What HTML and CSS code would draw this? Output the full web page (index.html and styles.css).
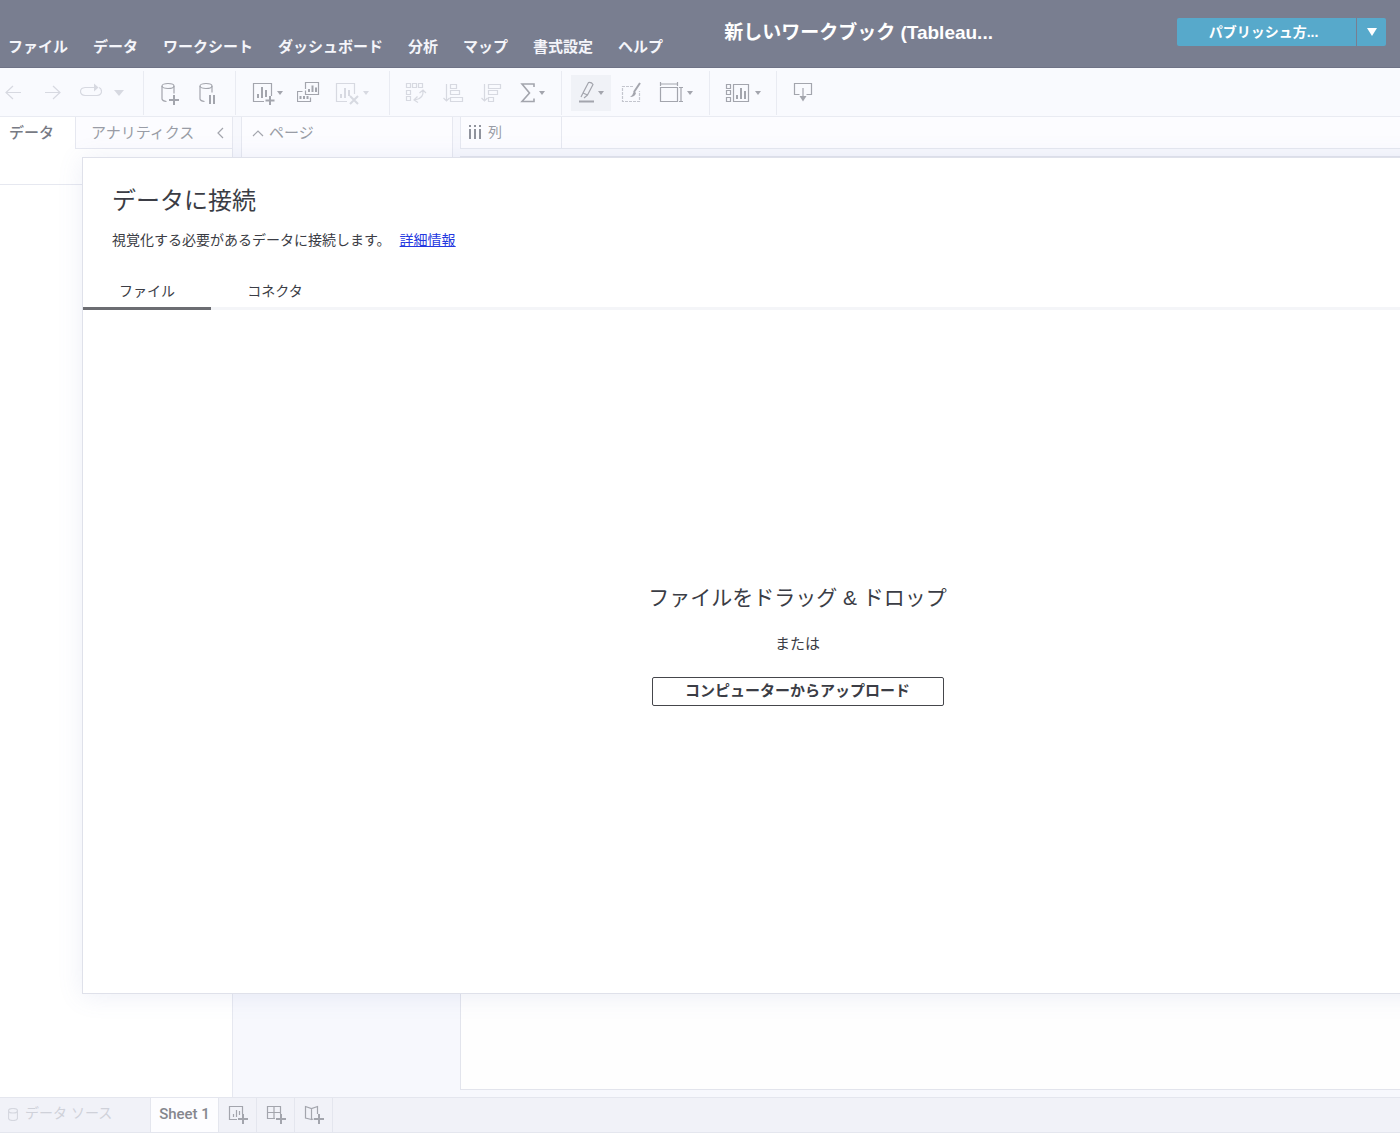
FILE: index.html
```html
<!DOCTYPE html>
<html lang="ja">
<head>
  <meta charset="UTF-8" />
  <meta name="viewport" content="width=device-width, initial-scale=1.0"/>
  <title>新しいワークブック</title>
  <link rel="stylesheet" href="styles.css">
</head>
<body>
  <header class="topbar">
    <nav class="menu">
      <a href="#">ファイル</a>
      <a href="#">データ</a>
      <a href="#">ワークシート</a>
      <a href="#">ダッシュボード</a>
      <a href="#">分析</a>
      <a href="#">マップ</a>
      <a href="#">書式設定</a>
      <a href="#">ヘルプ</a>
    </nav>
    <h1>新しいワークブック (Tableau...</h1>
    <div class="publish">
      <button class="publish-main">パブリッシュ方...</button>
      <button class="publish-more" aria-label="その他"><svg width="10" height="8" viewBox="0 0 10 8"><path d="M0 0h10L5 8z" fill="#fff"/></svg></button>
    </div>
  </header>

  <div class="toolbar">
    <div class="group history">
      <button class="tool off" aria-label="元に戻す"><svg width="22" height="24" viewBox="0 0 22 24"><path d="M19 11.500H4M11 5l-7 6.500 7 6.500"/></svg></button>
      <button class="tool off" aria-label="やり直し"><svg width="22" height="24" viewBox="0 0 22 24"><path d="M4 11.500h15M12 5l7 6.500-7 6.500"/></svg></button>
      <button class="tool off" aria-label="リプレイ">
        <svg width="22" height="24" viewBox="0 0 22 24"><path d="M15 6.500H5q-4.500.5-4.500 4t4.500 4h12q4.500-.5 4.500-4 0-3-2.500-4"/><path class="fill" d="M14 2.500l4.500 4-4.500 4z"/></svg>
        <svg width="10" height="6" viewBox="0 0 10 6"><path class="fill" d="M0 0h10L5 6z"/></svg>
      </button>
    </div>

    <div class="group">
      <button class="tool" aria-label="新しいデータソース"><svg width="24" height="24" viewBox="0 0 24 24"><ellipse cx="10" cy="5" rx="6" ry="2.500"/><path d="M4 5v13q.5 2 4.500 2.500M16 5v7.500"/><path class="bold" d="M16 14v10M11 19h10"/></svg></button>
      <button class="tool" aria-label="自動更新の一時停止"><svg width="24" height="24" viewBox="0 0 24 24"><ellipse cx="10" cy="5" rx="6" ry="2.500"/><path d="M4 5v13q.5 2 4.500 2.500M16 5v6.500"/><path class="bold" d="M14 14v9M18 14v9"/></svg></button>
    </div>

    <div class="group sheets">
      <button class="tool" aria-label="新しいワークシート">
        <svg width="24" height="24" viewBox="0 0 24 24"><path d="M13 20.500H2.500v-18h18V15"/><path class="bold" d="M7 13v4M11 6v11M15 9v7M19 15v9M14.500 19.500h9"/></svg>
        <svg width="6" height="4" viewBox="0 0 6 4"><path class="fill" d="M0 0h6L3 4z"/></svg>
      </button>
      <button class="tool" aria-label="複製"><svg width="24" height="24" viewBox="0 0 24 24"><path d="M8.500 8V1.500h13v12h-13v-4M5.500 10.500h-5v10h13v-4"/><path class="bold" d="M12 8v3M15.500 4.500V11M19 6.500V11M3.500 15v3M7 15v3M10.500 15v3"/></svg></button>
      <button class="tool clear off" aria-label="シートのクリア">
        <svg width="24" height="24" viewBox="0 0 24 24"><path d="M12 20.500H1.500v-18h18V13"/><path class="bold" d="M6 13v4M10 7v10M14 9v6M15 15l8 8M23 15l-8 8"/></svg>
        <svg width="6" height="4" viewBox="0 0 6 4"><path class="fill" d="M0 0h6L3 4z"/></svg>
      </button>
    </div>

    <div class="group">
      <button class="tool off" aria-label="行と列の交換"><svg width="24" height="24" viewBox="0 0 24 24"><path d="M2.500 2.500h4v4h-4zM8.500 2.500h4v4h-4zM14.500 2.500h4v4h-4zM2.500 9.500h4v4h-4zM2.500 15.500h4v4h-4zM19 9.500q1 8-8 9.500M15.500 12l3.500-3 3 3M13.500 15.500L10 19l4 2.500"/></svg></button>
      <button class="tool off" aria-label="昇順で並べ替え"><svg width="24" height="24" viewBox="0 0 24 24"><path d="M4.500 3v17M1.500 17l3 3 3-3M8.500 3.500h6v4h-6zM8.500 9.500h9v4h-9zM8.500 16.500h12v4h-12z"/></svg></button>
      <button class="tool off" aria-label="降順で並べ替え"><svg width="24" height="24" viewBox="0 0 24 24"><path d="M4.500 3v17M1.500 17l3 3 3-3M8.500 3.500h12v4h-12zM8.500 9.500h9v4h-9zM8.500 16.500h5v4h-5z"/></svg></button>
      <button class="tool total" aria-label="合計">
        <svg width="18" height="24" viewBox="0 0 18 24"><path class="sum" d="M15 6V3H3l7.500 9L3 20.500h12v-3"/></svg>
        <svg width="6" height="4" viewBox="0 0 6 4"><path class="fill" d="M0 0h6L3 4z"/></svg>
      </button>
    </div>

    <div class="group marks">
      <button class="tool active" aria-label="ハイライト">
        <svg width="18" height="24" viewBox="0 0 18 24"><path d="M10.500 1.500q3-.5 4.500 2L9.500 14 5 12zM5 12l-2 4M9.500 14L6 17"/><path class="bold" d="M1 20.500h15"/></svg>
        <svg width="6" height="4" viewBox="0 0 6 4"><path class="fill" d="M0 0h6L3 4z"/></svg>
      </button>
      <button class="tool" aria-label="書式設定"><svg width="24" height="24" viewBox="0 0 24 24"><path class="dash" d="M14 5.500H3.500v15h17V10"/><path class="bold" d="M21 2l-6 9"/><path class="fill" d="M15 10l2 2q-1 4-6 4 3-2 4-6z"/></svg></button>
      <button class="tool size" aria-label="サイズ">
        <svg width="24" height="24" viewBox="0 0 24 24"><path d="M1.500 6.500h17v14h-17zM1.500 1v4M18.500 1v4M1.500 3h17M20 6.500h4M20 20.500h4M22 6.500v14"/></svg>
        <svg width="6" height="4" viewBox="0 0 6 4"><path class="fill" d="M0 0h6L3 4z"/></svg>
      </button>
    </div>

    <div class="group">
      <button class="tool size" aria-label="表示形式">
        <svg width="27" height="24" viewBox="0 0 27 24"><path d="M2.500 3.500h4v4h-4zM2.500 9.500h4v4h-4zM2.500 16.500h4v4h-4zM9.500 3.500h15v17h-15z"/><path class="bold" d="M13 14v4M17 7v11M21 10v8"/></svg>
        <svg width="6" height="4" viewBox="0 0 6 4"><path class="fill" d="M0 0h6L3 4z"/></svg>
      </button>
    </div>

    <div class="group">
      <button class="tool" aria-label="ダウンロード"><svg width="24" height="24" viewBox="0 0 24 24"><path d="M8.500 13.500h-5v-11h17v11h-5"/><path d="M12 7v10"/><path class="fill" d="M8.500 15h7L12 20.500z"/></svg></button>
    </div>
  </div>

  <main class="workspace">
    <aside class="pane">
      <div class="pane-tabs">
        <button class="pane-tab current">データ</button>
        <button class="pane-tab">アナリティクス
          <svg width="8" height="12" viewBox="0 0 8 12"><path d="M7 1L2 6l5 5"/></svg>
        </button>
      </div>
      <div class="pane-source"></div>
    </aside>

    <section class="cards">
      <div class="card">
        <svg width="12" height="8" viewBox="0 0 12 8"><path d="M1 7l5-5 5 5"/></svg>
        ページ
      </div>
    </section>

    <section class="view">
      <div class="shelf">
        <div class="shelf-label">
          <svg width="14" height="16" viewBox="0 0 14 16"><path d="M2 1v2M7 1v2M12 1v2M2 5v10M7 5v10M12 5v10"/></svg>
          列
        </div>
      </div>
      <div class="canvas"></div>
    </section>

    <!-- Connect dialog -->
    <div class="dialog" role="dialog" aria-labelledby="connectTitle">
      <div class="dialog-head">
        <h2 id="connectTitle">データに接続</h2>
        <p>視覚化する必要があるデータに接続します。<a href="#">詳細情報</a></p>
      </div>
      <div class="dialog-tabs">
        <button class="dialog-tab selected">ファイル</button>
        <button class="dialog-tab">コネクタ</button>
      </div>
      <div class="drop">
        <p class="drop-title">ファイルをドラッグ &amp; ドロップ</p>
        <p class="drop-or">または</p>
        <button class="upload">コンピューターからアップロード</button>
      </div>
    </div>
  </main>

  <footer class="sheetbar">
    <button class="source-tab" disabled>
      <svg width="10" height="13" viewBox="0 0 10 13"><path d="M.5 3v7q0 2.500 4.500 2.500T9.500 10V3Q9.500.5 5 .5T.5 3zM.5 3Q1 5 5 5t4.500-2"/></svg>
      データ ソース
    </button>
    <button class="sheet-tab">Sheet 1</button>
    <button class="add" aria-label="新しいワークシート"><svg width="20" height="20" viewBox="0 0 20 20"><path d="M9 14.500H1.500v-13h13V9"/><path d="M5.500 9v3M8.500 5v7M11.500 6v4"/><path class="bold" d="M15 9v10M10 14h10"/></svg></button>
    <button class="add" aria-label="新しいダッシュボード"><svg width="20" height="20" viewBox="0 0 20 20"><path d="M9 13.500H1.500v-12h13V9M8 1.500v12M1.500 7.500h13"/><path class="bold" d="M15 9v10M10 14h10"/></svg></button>
    <button class="add" aria-label="新しいストーリー"><svg width="20" height="20" viewBox="0 0 20 20"><path d="M7.500 14.500L1.500 13V1.500l6 2 6-2V9M7.500 3.500v11l2-.5"/><path class="bold" d="M15 9v10M10 14h10"/></svg></button>
  </footer>
</body>
</html>
```
FILE: styles.css
```css
* {
  box-sizing: border-box;
}
body {
  margin: 0;
  min-height: 100vh;
  display: flex;
  flex-direction: column;
  font-family: "Liberation Sans", "Noto Sans CJK JP", sans-serif;
  font-size: 15px;
  line-height: 20px;
  color: #3b3d45;
  background: #fff;
  overflow-x: hidden;
}
h1, h2, p {
  margin: 0;
}
button {
  font: inherit;
  color: inherit;
  background: none;
  border: none;
  padding: 0;
  cursor: pointer;
}
svg {
  display: block;
  flex: none;
  fill: none;
  stroke: #a3a5ad;
  stroke-width: 1.2;
}
svg .fill {
  fill: #a3a5ad;
  stroke: none;
}
svg .bold {
  stroke-width: 2;
}
svg .sum {
  stroke-width: 1.6;
}
svg .dash {
  stroke-dasharray: 3 1;
  stroke: #c4c6ce;
}

/* top bar */
.topbar {
  display: flex;
  height: 68px;
  padding: 0 14px 0 8px;
  background: #797e90;
  border-bottom: 1px solid #6f7386;
  color: #fff;
}
.menu {
  display: flex;
  gap: 25px;
  padding-top: 37px;
}
.menu a {
  color: #f4f5fa;
  font-weight: bold;
  text-decoration: none;
  white-space: nowrap;
}
.topbar h1 {
  margin-left: 61px;
  padding-top: 21px;
  font-size: 19px;
  line-height: 24px;
  font-weight: bold;
  white-space: nowrap;
}
.publish {
  display: flex;
  gap: 1px;
  margin: 18px 0 0 auto;
  height: 28px;
  font-size: 14px;
  font-weight: bold;
}
.publish-main {
  width: 179px;
  padding-right: 6px;
  background: #57a9cb;
  border-radius: 2px 0 0 2px;
}
.publish-more {
  display: flex;
  align-items: center;
  justify-content: center;
  width: 29px;
  background: #57a9cb;
  border-radius: 0 2px 2px 0;
}
.publish-more svg {
  stroke: none;
}

/* toolbar */
.toolbar {
  display: flex;
  height: 49px;
  padding-top: 3px;
  background: #f9fafe;
  border-bottom: 1px solid #e9ebf2;
}
.group {
  display: flex;
  align-items: center;
  padding: 0 8px 0 7px;
  border-right: 1px solid #e9ebf2;
  height: 44px;
}
.group:last-child {
  border-right: none;
}
.tool {
  display: flex;
  align-items: center;
  justify-content: center;
  gap: 2px;
  min-width: 38px;
  height: 36px;
  padding: 0 7px;
}
.sheets {
  padding: 0 13px 0 8px;
}
.tool.clear {
  gap: 4px;
}
.tool.total {
  min-width: 42px;
}
.marks {
  padding: 0 8px 0 9px;
}
.marks .tool {
  min-width: 40px;
}
.tool.active {
  padding: 0 6px;
  background: #f0f2f7;
}
.tool.size {
  gap: 4px;
  min-width: 50px;
}
.tool.off svg {
  stroke: #d7d9e1;
}
.tool.off .fill {
  fill: #d7d9e1;
}
.history {
  gap: 17px;
  padding: 0 19px 0 2px;
}
.history .tool {
  gap: 12px;
  min-width: 22px;
  padding: 0;
}

/* workspace */
.workspace {
  position: relative;
  flex: 1;
  display: flex;
  gap: 8px;
  background: #f7f8fd;
  overflow: hidden;
}
.pane {
  width: 233px;
  background: #fff;
  border-right: 1px solid #e6e8f0;
}
.pane-tabs {
  display: flex;
  height: 32px;
}
.pane-tab {
  display: flex;
  flex: 1;
  align-items: center;
  justify-content: space-between;
  padding: 0 8px 0 15px;
  color: #999ca6;
  white-space: nowrap;
  background: #fcfcff;
  border-left: 1px solid #e6e8f0;
  border-bottom: 1px solid #e6e8f0;
}
.pane-tab.current {
  flex: none;
  width: 75px;
  padding: 0 9px;
  color: #777a84;
  font-weight: 500;
  background: #fff;
  border: none;
}
.pane-source {
  height: 36px;
  border-bottom: 1px solid #e6e8f0;
}
.cards {
  width: 212px;
}
.card {
  display: flex;
  align-items: center;
  gap: 5px;
  height: 80px;
  padding: 0 10px 48px;
  color: #999ca6;
  background: #fcfcff;
  border: 1px solid #e6e8f0;
  border-top: none;
}
.view {
  flex: 1;
  display: flex;
  flex-direction: column;
  gap: 7px;
  padding-bottom: 7px;
  margin-left: -1px;
}
.shelf {
  height: 32px;
  background: #fcfcff;
  border: 1px solid #e6e8f0;
  border-width: 0 0 1px 1px;
}
.shelf-label {
  display: flex;
  align-items: center;
  gap: 6px;
  width: 101px;
  height: 31px;
  padding: 0 0 2px 7px;
  color: #999ca6;
  font-size: 14px;
  border-right: 1px solid #e6e8f0;
}
.shelf-label svg {
  stroke: #90939d;
  stroke-width: 2;
}
.canvas {
  flex: 1;
  background: #fefefe;
  border: 1px solid #e2e4ec;
  border-right: none;
}

/* dialog lies over the workspace and runs past its right edge */
.dialog {
  position: absolute;
  top: 40px;
  right: -113px;
  bottom: 103px;
  left: 82px;
  display: flex;
  flex-direction: column;
  background: #fff;
  border: 1px solid #dfe1ea;
  box-shadow: 0 2px 24px rgba(110, 120, 190, 0.12);
}
.dialog-head {
  padding: 27px 29px 0;
  height: 117px;
  font-size: 14px;
}
.dialog-head h2 {
  margin-bottom: 13px;
  font-size: 24px;
  line-height: 32px;
  font-weight: normal;
}
.dialog-head a {
  margin-left: 9px;
  color: #2438e0;
}
.dialog-tabs {
  display: flex;
  height: 35px;
  border-bottom: 3px solid #f4f5f8;
}
.dialog-tab {
  width: 128px;
  height: 35px;
  padding-bottom: 1px;
  font-size: 14px;
  border-bottom: 3px solid transparent;
}
.dialog-tab.selected {
  border-bottom-color: #6c6d72;
}
.drop {
  flex: 1;
  display: flex;
  flex-direction: column;
  align-items: center;
  justify-content: center;
  padding-bottom: 14px;
}
.drop-title {
  font-size: 21px;
  line-height: 28px;
}
.drop-or {
  margin: 22px 0 23px;
}
.upload {
  width: 292px;
  height: 29px;
  font-weight: bold;
  line-height: 24px;
  border: 1px solid #45464b;
  border-radius: 2px;
}

/* sheet tabs */
.sheetbar {
  display: flex;
  height: 36px;
  margin-bottom: 2px;
  background: #f1f2f8;
  border-top: 1px solid #e4e6ee;
  border-bottom: 1px solid #e4e6ee;
}
.sheetbar button {
  border-right: 1px solid #e4e6ee;
}
.source-tab {
  display: flex;
  align-items: center;
  gap: 7px;
  width: 151px;
  padding: 0 0 4px 8px;
  font-size: 14px;
  color: #cfd1d9;
}
.source-tab svg {
  margin-top: 3px;
  stroke: #d5d7df;
}
.sheet-tab {
  width: 68px;
  padding-bottom: 3px;
  font-family: Roboto, sans-serif;
  font-weight: 500;
  color: #85878e;
  background: #fdfdff;
}
.add {
  display: flex;
  align-items: center;
  justify-content: center;
  width: 38px;
}
```
